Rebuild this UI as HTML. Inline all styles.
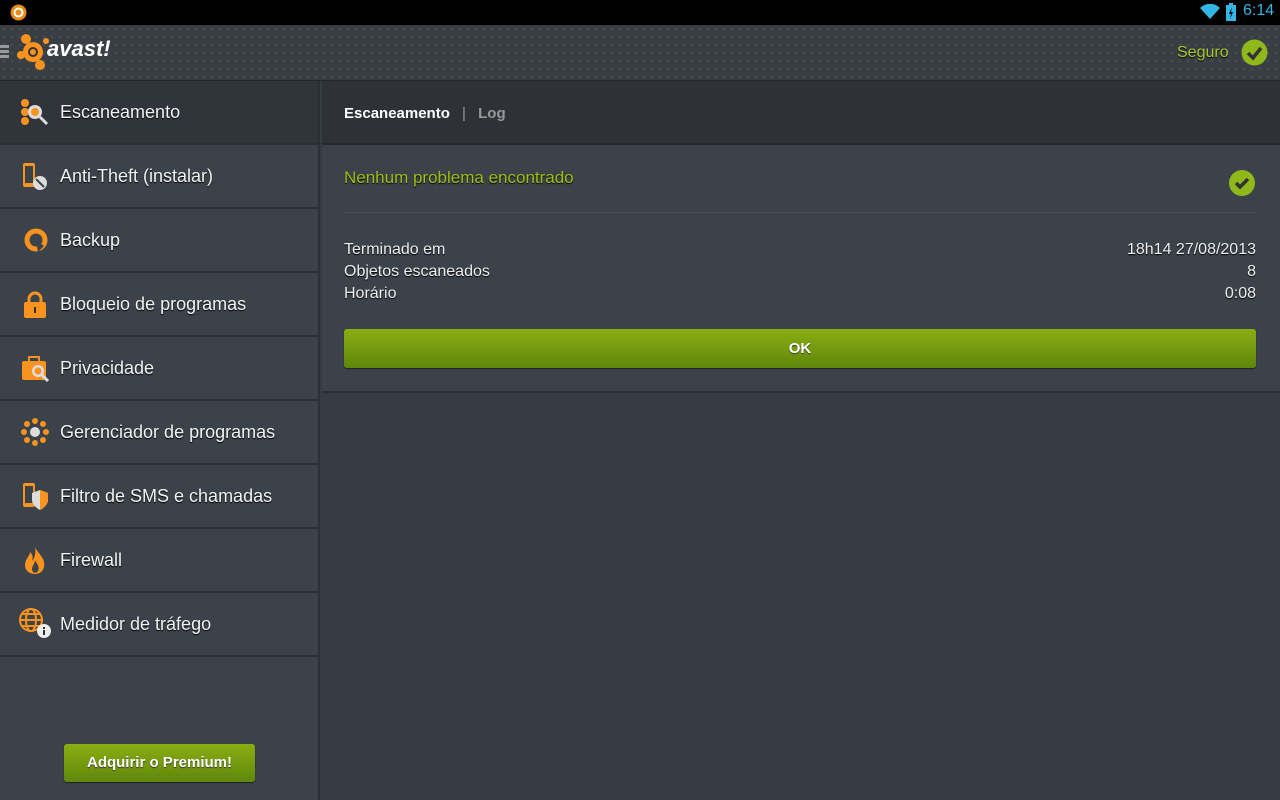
<!DOCTYPE html>
<html><head><meta charset="utf-8"><style>
*{margin:0;padding:0;box-sizing:border-box}
body{width:1280px;height:800px;overflow:hidden;background:#363c43;font-family:"Liberation Sans",sans-serif;position:relative}
.status{position:absolute;left:0;top:0;width:1280px;height:25px;background:#000}
.header{position:absolute;left:0;top:25px;width:1280px;height:56px;background:#3a3f45;border-bottom:1px solid #24282c;
background-image:radial-gradient(circle at 50% 50%,#42474e 35%,#34383e 40%,#3a3f45 60%);background-size:8px 8px}
.side{position:absolute;left:0;top:81px;width:320px;height:719px;background:#3b424a;border-right:2px solid #2b2f34}
.item{height:64px;border-bottom:2px solid #2b2f34;position:relative;color:#f2f2f2;font-size:18px;line-height:62px;padding-left:60px;text-shadow:0 1px 1px #000}
.item.sel{background:#30353b}
.item svg{position:absolute;left:20px;top:17px}
.tabs{position:absolute;left:322px;top:81px;width:958px;height:64px;background:#2e3237;border-bottom:2px solid #25292d}
.content{position:absolute;left:322px;top:145px;width:958px;height:248px;background:#3b424a;border-bottom:2px solid #2b2f34}
.btn{background:linear-gradient(#8aae12,#5f870b);border-radius:3px;color:#fff;font-weight:bold;text-align:center;box-shadow:0 1px 1px #1f2326;text-shadow:0 1px 1px #333}
.row{display:flex;justify-content:space-between;color:#eee;font-size:16px;height:22px;line-height:22px;text-shadow:0 1px 1px #000}
</style></head><body>
<div class="status">
<svg style="position:absolute;left:10px;top:4px" width="17" height="17"><circle cx="8.5" cy="8.5" r="8" fill="#e88a14"/><circle cx="8.5" cy="8.5" r="4" fill="none" stroke="#fff" stroke-width="2"/></svg>
<svg style="position:absolute;left:1200px;top:4px" width="20" height="16"><path d="M10 15 L0 4 A14 14 0 0 1 20 4 Z" fill="#33b5e5"/></svg>
<svg style="position:absolute;left:1226px;top:3px" width="10" height="18"><rect x="0" y="2" width="10" height="16" fill="#33b5e5"/><rect x="3" y="0" width="4" height="2" fill="#33b5e5"/><path d="M6 4 L3 11 H5 L4 16 L7 9 H5 Z" fill="#000"/></svg>
<div style="position:absolute;left:1243px;top:2px;color:#33b5e5;font-size:16px">6:14</div>
</div>
<div class="header">
<div style="position:absolute;left:0;top:20px;width:9px;height:3px;background:#999;box-shadow:0 5px 0 #999,0 10px 0 #999"></div>
<svg style="position:absolute;left:16px;top:8px" width="38" height="38"><circle cx="17" cy="19" r="10" fill="#f7931e"/><circle cx="10" cy="6" r="5" fill="#f7931e"/><circle cx="5" cy="22" r="4" fill="#f7931e"/><circle cx="24" cy="32" r="5" fill="#f7931e"/><circle cx="30" cy="8" r="3" fill="#f7931e"/><circle cx="17" cy="19" r="4" fill="none" stroke="#333" stroke-width="2"/></svg>
<div style="position:absolute;left:47px;top:11px;color:#fff;font-size:22px;font-style:italic;font-weight:bold;letter-spacing:0">avast!</div>
<div style="position:absolute;left:1177px;top:19px;color:#a4c92a;font-size:16px;text-shadow:0 1px 1px #000">Seguro</div>
<svg style="position:absolute;left:1241px;top:14px" width="27" height="27"><circle cx="13.5" cy="13.5" r="13" fill="#8fb81a"/><path d="M7 14 L12 19 L20 9" fill="none" stroke="#333" stroke-width="3.5"/></svg>
</div>
<div class="side">
<div class="item sel"><svg width="30" height="30"><circle cx="5" cy="5" r="4" fill="#f7931e"/><circle cx="5" cy="14" r="4" fill="#f7931e"/><circle cx="5" cy="23" r="4" fill="#f7931e"/><circle cx="15" cy="14" r="7" fill="#ddd"/><circle cx="15" cy="14" r="4" fill="#f7931e"/><path d="M20 19 L27 26" stroke="#ddd" stroke-width="3"/></svg>Escaneamento</div>
<div class="item"><svg width="30" height="30"><rect x="3" y="1" width="12" height="24" rx="2" fill="#f7931e"/><rect x="5" y="4" width="8" height="17" fill="#3b424a"/><circle cx="20" cy="21" r="7" fill="#ddd"/><path d="M16 17 L24 25" stroke="#3b424a" stroke-width="2"/></svg>Anti-Theft (instalar)</div>
<div class="item"><svg width="30" height="30"><circle cx="16" cy="14" r="9" fill="none" stroke="#f7931e" stroke-width="5"/><path d="M16 14 L18 26 L24 20 Z" fill="#3b424a"/></svg>Backup</div>
<div class="item"><svg width="30" height="30"><path d="M9 13 V9 A6 6 0 0 1 21 9 V13" fill="none" stroke="#f7931e" stroke-width="3"/><rect x="4" y="12" width="22" height="16" rx="2" fill="#f7931e"/><rect x="14" y="17" width="2" height="6" fill="#333"/></svg>Bloqueio de programas</div>
<div class="item"><svg width="32" height="30"><rect x="2" y="7" width="24" height="19" rx="2" fill="#f7931e"/><rect x="9" y="3" width="10" height="5" fill="none" stroke="#f7931e" stroke-width="2"/><circle cx="18" cy="17" r="6" fill="#ddd"/><circle cx="18" cy="17" r="3.5" fill="#f7931e"/><path d="M22 21 L28 27" stroke="#ddd" stroke-width="3"/></svg>Privacidade</div>
<div class="item"><svg width="30" height="30"><circle cx="15" cy="14" r="5" fill="#ddd"/><g fill="#f7931e"><circle cx="15" cy="3" r="3"/><circle cx="15" cy="25" r="3"/><circle cx="4" cy="14" r="3"/><circle cx="26" cy="14" r="3"/><circle cx="7" cy="6" r="3"/><circle cx="23" cy="6" r="3"/><circle cx="7" cy="22" r="3"/><circle cx="23" cy="22" r="3"/></g></svg>Gerenciador de programas</div>
<div class="item"><svg width="30" height="30"><rect x="3" y="1" width="12" height="24" rx="2" fill="#f7931e"/><rect x="5" y="4" width="8" height="17" fill="#3b424a"/><path d="M12 11 L20 8 L28 11 V18 C28 24 20 28 20 28 C20 28 12 24 12 18 Z" fill="#ddd"/><path d="M20 8 L28 11 V18 C28 24 20 28 20 28 Z" fill="#f7931e"/></svg>Filtro de SMS e chamadas</div>
<div class="item"><svg width="30" height="30"><path d="M15 1 C18 8 26 12 24 21 C23 26 19 28 15 28 C10 28 5 25 5 19 C5 13 10 10 10 6 C13 9 13 12 12 15 C15 12 16 6 15 1 Z" fill="#f7931e"/><path d="M15 14 C17 18 20 21 18 25 C16 28 12 27 12 23 C12 20 15 18 15 14 Z" fill="#3b424a"/></svg>Firewall</div>
<div class="item"><svg width="34" height="34" style="left:18px;top:14px"><circle cx="13" cy="13" r="11" fill="none" stroke="#f7931e" stroke-width="2"/><ellipse cx="13" cy="13" rx="5" ry="11" fill="none" stroke="#f7931e" stroke-width="2"/><path d="M2 13 H24 M4 7 H22 M4 19 H22" stroke="#f7931e" stroke-width="2"/><circle cx="26" cy="24" r="7" fill="#eee"/><rect x="25" y="23" width="2" height="5" fill="#333"/><rect x="25" y="20" width="2" height="2" fill="#333"/></svg>Medidor de tráfego</div>
<div class="btn" style="position:absolute;left:64px;top:663px;width:191px;height:38px;line-height:38px;font-size:15px">Adquirir o Premium!</div>
</div>
<div class="tabs"><div style="position:absolute;left:22px;top:24px;font-size:15px;font-weight:bold;color:#fff">Escaneamento <span style="color:#999;font-weight:normal;margin:0 8px 0 8px">|</span> <span style="color:#999">Log</span></div></div>
<div class="content">
<div style="position:absolute;left:22px;top:23px;color:#9cc10e;font-size:17px;text-shadow:0 1px 1px #000">Nenhum problema encontrado</div>
<svg style="position:absolute;left:906px;top:24px" width="28" height="28"><circle cx="14" cy="14" r="13" fill="#8fb81a"/><path d="M8 14 L12 18 L20 10" fill="none" stroke="#333" stroke-width="3.5"/></svg>
<div style="position:absolute;left:22px;top:67px;width:912px;height:1px;background:#252a2f;border-bottom:1px solid #4a5159"></div>
<div style="position:absolute;left:22px;top:94px;width:912px">
<div class="row"><span>Terminado em</span><span>18h14 27/08/2013</span></div>
<div class="row"><span>Objetos escaneados</span><span>8</span></div>
<div class="row"><span>Horário</span><span>0:08</span></div>
</div>
<div class="btn" style="position:absolute;left:22px;top:184px;width:912px;height:39px;line-height:39px;font-size:15px">OK</div>
</div>
</body></html>
